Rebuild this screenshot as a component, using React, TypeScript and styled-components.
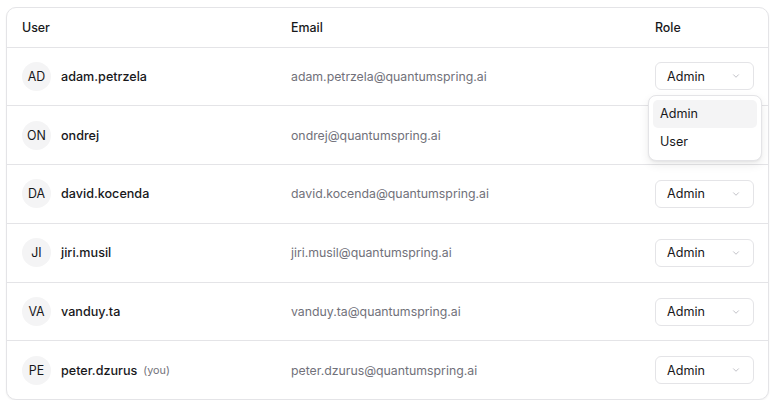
import React from "react";
import styled, { createGlobalStyle } from "styled-components";

const Global = createGlobalStyle`
  html, body { margin: 0; padding: 0; background: #ffffff; }
  body { font-family: Inter, "Noto Sans", sans-serif; -webkit-font-smoothing: antialiased; color: #18181b; }
`;

const Page = styled.div`
  padding: 7px 9px 0 6px;
`;

const Card = styled.div`
  width: 763px;
  box-sizing: border-box;
  border: 1px solid #e4e4e7;
  border-radius: 10px;
  box-shadow: 0 1px 2px rgba(0, 0, 0, 0.06);
  background: #fff;
`;

const Grid = styled.div`
  display: grid;
  grid-template-columns: 269px 364px 1fr;
`;

const HeaderCell = styled.div`
  height: 38.5px;
  display: flex;
  align-items: center;
  padding: 0 15px;
  font-size: 12.4px;
  font-weight: 500;
  color: #18181b;
  border-bottom: 1px solid #e4e4e7;
`;

const Cell = styled.div<{ $last?: boolean }>`
  position: relative;
  height: 57.8px;
  display: flex;
  align-items: center;
  padding: 0 15px;
  border-bottom: ${(p) => (p.$last ? "none" : "1px solid #e4e4e7")};
`;

const Avatar = styled.div`
  width: 29px;
  height: 29px;
  border-radius: 50%;
  background: #f4f4f5;
  display: flex;
  align-items: center;
  justify-content: center;
  font-size: 12.4px;
  font-weight: 400;
  color: #18181b;
  flex-shrink: 0;
`;

const Name = styled.span`
  margin-left: 10px;
  font-size: 12.6px;
  font-weight: 500;
  color: #18181b;
`;

const You = styled.span`
  margin-left: 6px;
  font-size: 10.8px;
  color: #71717a;
`;

const Email = styled.span`
  font-size: 12.3px;
  color: #71717a;
`;

const Select = styled.div`
  width: 99px;
  height: 28px;
  box-sizing: border-box;
  border: 1px solid #e4e4e7;
  border-radius: 6px;
  display: flex;
  align-items: center;
  justify-content: space-between;
  padding: 0 12px 0 11px;
  font-size: 12.6px;
  color: #18181b;
  background: #fff;
`;

const Menu = styled.div`
  position: absolute;
  left: 8px;
  top: 47px;
  width: 114px;
  box-sizing: border-box;
  padding: 4px;
  background: #fff;
  border: 1px solid #e4e4e7;
  border-radius: 8px;
  box-shadow: 0 4px 10px rgba(0, 0, 0, 0.08), 0 1px 2px rgba(0, 0, 0, 0.05);
  z-index: 10;
`;

const MenuItem = styled.div<{ $active?: boolean }>`
  height: 28px;
  display: flex;
  align-items: center;
  padding: 0 7px;
  border-radius: 5px;
  font-size: 12.6px;
  color: #18181b;
  background: ${(p) => (p.$active ? "#f4f4f5" : "transparent")};
`;

const Chevron = () => (
  <svg width="10" height="10" viewBox="0 0 24 24" fill="none" stroke="#a1a1aa" strokeWidth="1.6" strokeLinecap="round" strokeLinejoin="round">
    <path d="m6 9 6 6 6-6" />
  </svg>
);

const users = [
  { init: "AD", name: "adam.petrzela", email: "adam.petrzela@quantumspring.ai" },
  { init: "ON", name: "ondrej", email: "ondrej@quantumspring.ai" },
  { init: "DA", name: "david.kocenda", email: "david.kocenda@quantumspring.ai" },
  { init: "JI", name: "jiri.musil", email: "jiri.musil@quantumspring.ai" },
  { init: "VA", name: "vanduy.ta", email: "vanduy.ta@quantumspring.ai" },
  { init: "PE", name: "peter.dzurus", email: "peter.dzurus@quantumspring.ai", you: true },
];

export default function App() {
  return (
    <>
      <Global />
      <Page>
        <Card>
          <Grid>
            <HeaderCell>User</HeaderCell>
            <HeaderCell>Email</HeaderCell>
            <HeaderCell>Role</HeaderCell>
            {users.map((u, i) => {
              const last = i === users.length - 1;
              return (
                <React.Fragment key={u.name}>
                  <Cell $last={last}>
                    <Avatar>{u.init}</Avatar>
                    <Name>{u.name}</Name>
                    {u.you && <You>(you)</You>}
                  </Cell>
                  <Cell $last={last}>
                    <Email>{u.email}</Email>
                  </Cell>
                  <Cell $last={last}>
                    {i !== 1 && (
                      <Select>
                        <span>Admin</span>
                        <Chevron />
                      </Select>
                    )}
                    {i === 0 && (
                      <Menu>
                        <MenuItem $active>Admin</MenuItem>
                        <MenuItem>User</MenuItem>
                      </Menu>
                    )}
                  </Cell>
                </React.Fragment>
              );
            })}
          </Grid>
        </Card>
      </Page>
    </>
  );
}
